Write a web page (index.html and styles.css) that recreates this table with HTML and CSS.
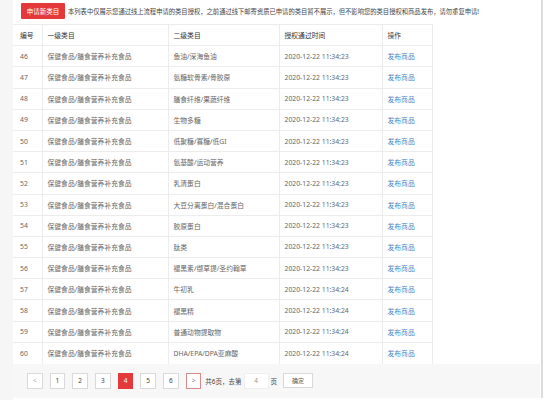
FILE: index.html
```html
<!DOCTYPE html>
<html lang="zh">
<head>
<meta charset="utf-8">
<link rel="stylesheet" href="styles.css">
</head>
<body>
<div class="page">
  <div class="side"></div>
  <div class="panel">
    <div class="toolbar">
      <button class="apply">申请新类目</button>
      <span class="note">本列表中仅展示您通过线上流程申请的类目授权，之前通过线下邮寄资质已申请的类目暂不展示，但不影响您的类目授权和商品发布，请勿重复申请!</span>
    </div>
    <table class="grid">
      <colgroup>
        <col class="c1"><col class="c2"><col class="c3"><col class="c4"><col class="c5">
      </colgroup>
      <thead>
        <tr><th>编号</th><th>一级类目</th><th>二级类目</th><th>授权通过时间</th><th>操作</th></tr>
      </thead>
      <tbody>
        <tr><td>46</td><td>保健食品/膳食营养补充食品</td><td>鱼油/深海鱼油</td><td>2020-12-22 11:34:23</td><td><a>发布商品</a></td></tr>
        <tr><td>47</td><td>保健食品/膳食营养补充食品</td><td>氨糖软骨素/骨胶原</td><td>2020-12-22 11:34:23</td><td><a>发布商品</a></td></tr>
        <tr><td>48</td><td>保健食品/膳食营养补充食品</td><td>膳食纤维/果蔬纤维</td><td>2020-12-22 11:34:23</td><td><a>发布商品</a></td></tr>
        <tr><td>49</td><td>保健食品/膳食营养补充食品</td><td>生物多糖</td><td>2020-12-22 11:34:23</td><td><a>发布商品</a></td></tr>
        <tr><td>50</td><td>保健食品/膳食营养补充食品</td><td>低聚糖/寡糖/低GI</td><td>2020-12-22 11:34:23</td><td><a>发布商品</a></td></tr>
        <tr><td>51</td><td>保健食品/膳食营养补充食品</td><td>氨基酸/运动营养</td><td>2020-12-22 11:34:23</td><td><a>发布商品</a></td></tr>
        <tr><td>52</td><td>保健食品/膳食营养补充食品</td><td>乳清蛋白</td><td>2020-12-22 11:34:23</td><td><a>发布商品</a></td></tr>
        <tr><td>53</td><td>保健食品/膳食营养补充食品</td><td>大豆分离蛋白/混合蛋白</td><td>2020-12-22 11:34:23</td><td><a>发布商品</a></td></tr>
        <tr><td>54</td><td>保健食品/膳食营养补充食品</td><td>胶原蛋白</td><td>2020-12-22 11:34:23</td><td><a>发布商品</a></td></tr>
        <tr><td>55</td><td>保健食品/膳食营养补充食品</td><td>肽类</td><td>2020-12-22 11:34:23</td><td><a>发布商品</a></td></tr>
        <tr><td>56</td><td>保健食品/膳食营养补充食品</td><td>褪黑素/缬草提/圣约翰草</td><td>2020-12-22 11:34:23</td><td><a>发布商品</a></td></tr>
        <tr><td>57</td><td>保健食品/膳食营养补充食品</td><td>牛初乳</td><td>2020-12-22 11:34:24</td><td><a>发布商品</a></td></tr>
        <tr><td>58</td><td>保健食品/膳食营养补充食品</td><td>褪黑精</td><td>2020-12-22 11:34:24</td><td><a>发布商品</a></td></tr>
        <tr><td>59</td><td>保健食品/膳食营养补充食品</td><td>普通动物提取物</td><td>2020-12-22 11:34:24</td><td><a>发布商品</a></td></tr>
        <tr><td>60</td><td>保健食品/膳食营养补充食品</td><td>DHA/EPA/DPA亚麻酸</td><td>2020-12-22 11:34:24</td><td><a>发布商品</a></td></tr>
      </tbody>
    </table>
    <div class="pager">
      <div class="pages">
        <span class="pg disabled">&lt;</span>
        <span class="pg">1</span>
        <span class="pg">2</span>
        <span class="pg">3</span>
        <span class="pg active">4</span>
        <span class="pg">5</span>
        <span class="pg">6</span>
        <span class="pg next">&gt;</span>
      </div>
      <div class="jump">
        <span class="info">共6页，去第</span>
        <span class="goto">4</span>
        <span class="info">页</span>
        <button class="ok">确定</button>
      </div>
    </div>
  </div>
  <div class="edge"></div>
</div>
</body>
</html>
```

FILE: styles.css
```css
* { box-sizing: border-box; }
html, body { margin: 0; padding: 0; background: #fff; }
body {
  font-family: "Noto Sans", "Noto Sans CJK SC", sans-serif;
  color: #555;
  width: 550px;
  height: 400px;
  overflow: hidden;
}
.page {
  display: flex;
  height: 400px;
}
.side {
  width: 13px;
  background: #f6f6f6;
  flex: none;
}
.panel {
  width: 528px;
  flex: none;
  background: #fff;
  display: flex;
  flex-direction: column;
}
.edge {
  width: 2px;
  height: 398px;
  background: #dcdcdc;
  flex: none;
}
.toolbar {
  display: flex;
  align-items: center;
  gap: 3px;
  padding: 3px 0 0 8px;
  height: 19px;
}
.apply {
  width: 44px;
  height: 16px;
  border: none;
  border-radius: 1px;
  background: #e3393b;
  color: #fff;
  font-family: inherit;
  font-size: 6.5px;
  padding: 0;
}
.note {
  font-size: 6.3px;
  color: #444;
  white-space: nowrap;
}
.grid {
  margin-top: 5px;
  width: 419px;
  border-collapse: collapse;
  table-layout: fixed;
  font-size: 6.8px;
}
.c1 { width: 29px; }
.c2 { width: 126px; }
.c3 { width: 111px; }
.c4 { width: 103px; }
.c5 { width: 50px; }
.grid th, .grid td {
  height: 21.2px;
  padding: 0 0 0 5px;
  text-align: left;
  white-space: nowrap;
  border-top: 1px solid #ececec;
  border-left: 1px solid #ececec;
  border-right: 1px solid #ececec;
}
.grid th:first-child, .grid td:first-child {
  padding-left: 7px;
  border-left: none;
}
.grid th {
  font-weight: normal;
  color: #333;
}
.grid td { color: #666; }
.grid a { color: #4686c6; }
.pager {
  margin-top: auto;
  margin-bottom: 2px;
  height: 35px;
  width: 527px;
  background: #f7f7f7;
  display: flex;
  align-items: center;
  gap: 4px;
  padding-left: 14px;
  font-size: 6.5px;
}
.pages {
  display: flex;
  align-items: center;
  gap: 7.2px;
}
.jump {
  display: flex;
  align-items: center;
  gap: 2px;
}
.pg {
  width: 15.5px;
  height: 16px;
  border: 1px solid #d9d9d9;
  background: #fff;
  display: flex;
  align-items: center;
  justify-content: center;
  color: #444;
}
.pg.disabled { color: #aaa; }
.pg.active {
  background: #e3393b;
  border-color: #e3393b;
  color: #fff;
}
.pg.next {
  border-color: #d8898a;
  color: #888;
}
.info {
  color: #444;
}
.goto {
  width: 25px;
  height: 16px;
  background: #fff;
  border: 1px solid #eee;
  display: flex;
  align-items: center;
  justify-content: center;
  color: #999;
}
.ok {
  width: 30px;
  height: 15px;
  border: 1px solid #d9d9d9;
  background: #fff;
  font-family: inherit;
  font-size: 6px;
  color: #555;
  padding: 0;
  margin-left: 4px;
}
```
